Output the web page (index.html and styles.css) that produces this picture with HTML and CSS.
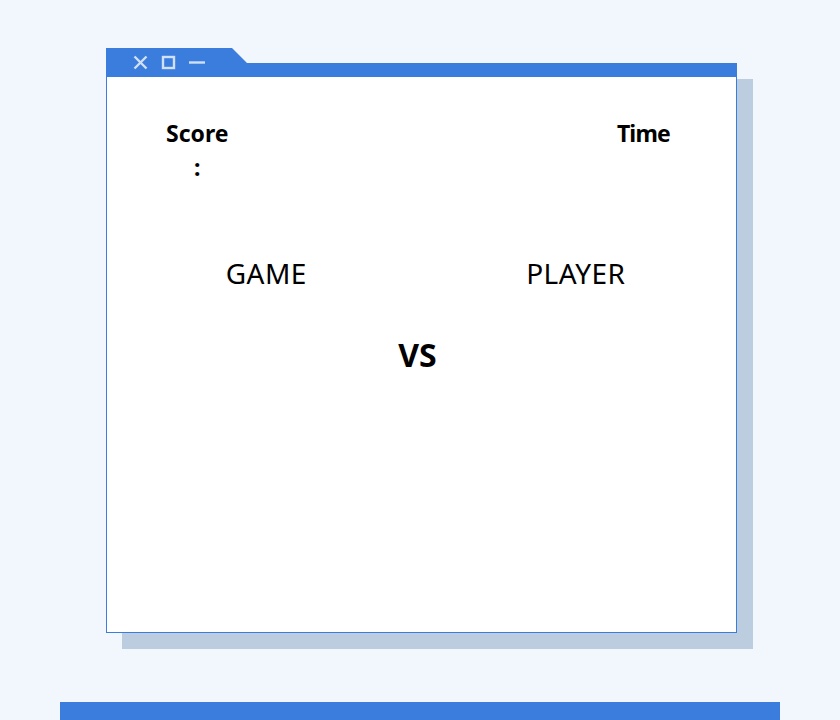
FILE: index.html
```html
<!DOCTYPE html>
<html lang="en">
<head>
  <meta charset="UTF-8" />
  <meta name="viewport" content="width=device-width, initial-scale=1" />
  <title>Game vs Player</title>
  <link rel="stylesheet" href="styles.css">
</head>
<body>
  <div class="page">
    <div class="window">
      <div class="titlebar">
        <div class="controls">
          <svg class="ctl" width="15" height="15" viewBox="0 0 15 15">
            <path d="M1.5 1.5 L13.5 13.5 M13.5 1.5 L1.5 13.5" stroke="#cfe0f7" stroke-width="2.4" fill="none" />
          </svg>
          <svg class="ctl" width="15" height="15" viewBox="0 0 15 15">
            <rect x="2" y="2" width="11" height="11" stroke="#cfe0f7" stroke-width="2.4" fill="none" />
          </svg>
          <svg class="ctl" width="16" height="15" viewBox="0 0 16 15">
            <path d="M0 7.5 H16" stroke="#cfe0f7" stroke-width="2.4" fill="none" />
          </svg>
        </div>
      </div>
      <div class="content">
        <div class="stats">
          <div class="stat">
            <div class="stat-label">Score</div>
            <div class="stat-value">:</div>
          </div>
          <div class="stat">
            <div class="stat-label time">Time</div>
          </div>
        </div>
        <div class="sides">
          <div class="side">GAME</div>
          <div class="side">PLAYER</div>
        </div>
        <div class="versus">VS</div>
      </div>
    </div>
  </div>
  <div class="footer-bar"></div>
</body>
</html>
```

FILE: styles.css
```css
html, body {
  margin: 0;
  padding: 0;
  background: #f1f7fd;
  font-family: "Noto Sans", "DejaVu Sans", sans-serif;
  color: #000;
}
.page {
  height: 702px;
  padding-top: 63px;
  box-sizing: border-box;
}
.window {
  width: 631px;
  margin-left: 106px;
  position: relative;
  box-shadow: 16px 16px 0 #bccde0;
}
/* bar across the top, tab sticks out above it */
.titlebar {
  height: 14px;
  position: relative;
  background: #3b7ddd;
}
.titlebar::before {
  content: "";
  position: absolute;
  left: 0;
  top: -15px;
  width: 141px;
  height: 15px;
  background: #3b7ddd;
  clip-path: polygon(0 0, 126px 0, 141px 100%, 0 100%);
}
.controls {
  position: absolute;
  left: 0;
  top: -15px;
  height: 29px;
  display: flex;
  align-items: center;
  gap: 13px;
  padding-left: 27px;
  padding-bottom: 1px;
  box-sizing: border-box;
}
.ctl {
  display: block;
  flex: none;
}
.content {
  height: 556px;
  border: 1px solid #3b7ddd;
  border-top: none;
  box-sizing: border-box;
  background: #fff;
}
.stats {
  display: flex;
  justify-content: space-between;
  padding: 40px 66px 0 59px;
}
.stat {
  display: flex;
  flex-direction: column;
  align-items: center;
}
.stat-label {
  font-size: 23px;
  font-weight: bold;
  line-height: 32px;
}
.stat-label.time {
  letter-spacing: -0.8px;
}
.stat-value {
  font-size: 23px;
  font-weight: bold;
  line-height: 24px;
  margin-top: 6px;
}
.sides {
  display: grid;
  grid-template-columns: 1fr 1fr;
  margin-top: 74px;
}
.side {
  text-align: center;
  font-size: 28px;
  line-height: 40px;
  letter-spacing: 0.4px;
}
.side:first-child {
  padding-left: 4px;
}
.side:last-child {
  padding-right: 6px;
}
.versus {
  text-align: center;
  font-size: 32px;
  font-weight: bold;
  line-height: 40px;
  margin-top: 42px;
  padding-right: 8px;
}
.footer-bar {
  margin: 0 60px;
  height: 18px;
  background: #3b7ddd;
}
```
